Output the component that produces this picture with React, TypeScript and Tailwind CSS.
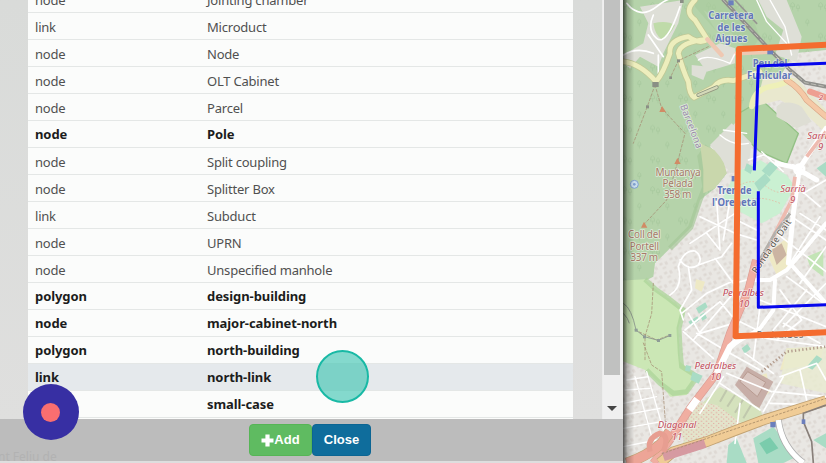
type Row = { kind: string; name: string; bold?: boolean; active?: boolean };

const rows: Row[] = [
  { kind: 'node', name: 'Jointing chamber' },
  { kind: 'link', name: 'Microduct' },
  { kind: 'node', name: 'Node' },
  { kind: 'node', name: 'OLT Cabinet' },
  { kind: 'node', name: 'Parcel' },
  { kind: 'node', name: 'Pole', bold: true },
  { kind: 'node', name: 'Split coupling' },
  { kind: 'node', name: 'Splitter Box' },
  { kind: 'link', name: 'Subduct' },
  { kind: 'node', name: 'UPRN' },
  { kind: 'node', name: 'Unspecified manhole' },
  { kind: 'polygon', name: 'design-building', bold: true },
  { kind: 'node', name: 'major-cabinet-north', bold: true },
  { kind: 'polygon', name: 'north-building', bold: true },
  { kind: 'link', name: 'north-link', bold: true, active: true },
  { kind: '', name: 'small-case', bold: true },
];

function TypeTable() {
  return (
    <div className="-mt-[14px] w-[545px] shrink-0 bg-[#fbfcfb] text-[13px] leading-[26px]">
      {rows.map((r) => (
        <div
          key={r.name}
          className={`grid h-[27px] grid-cols-[172px_1fr] border-b border-[#e4e7e6] pl-[7px] ${
            r.active ? 'bg-[#e5e9ec]' : ''
          } ${
            r.bold
              ? 'font-bold tracking-[-0.08px] text-[#1c1c1c]'
              : 'pt-px tracking-[-0.21px] text-[#505050]'
          }`}
        >
          <span>{r.kind}</span>
          <span>{r.name}</span>
        </div>
      ))}
    </div>
  );
}

function CityMap() {
  return (
    <svg viewBox="9 0 609 1389" className="block h-[463px] w-[203px] shrink-0" preserveAspectRatio="none">
      <defs>
        <pattern id="houses" width="34" height="30" patternUnits="userSpaceOnUse" patternTransform="rotate(-28)">
          <rect width="34" height="30" fill="#e9e7e3" />
          <rect x="4" y="4" width="9" height="7" fill="#dcd7d1" />
          <rect x="20" y="7" width="8" height="10" fill="#ded9d4" />
          <rect x="7" y="19" width="11" height="6" fill="#dfdad5" />
        </pattern>
        <pattern id="trees" width="84" height="92" patternUnits="userSpaceOnUse">
          <path d="M14 30v-10m-6 0q0-12 6-12t6 12zM30 34v-9m-5 0q0-11 5-11t5 11zM58 78v-9m-5 0q0-11 5-11t5 11z" fill="none" stroke="#a3c69b" strokeWidth="2" />
        </pattern>
        <pattern id="dots" width="15" height="13" patternUnits="userSpaceOnUse">
          <path d="M2 3h5M9 9h4" stroke="#e3a09a" strokeWidth="2.5" />
        </pattern>
        <linearGradient id="edge" x1="0" x2="1">
          <stop offset="0" stopColor="#000" stopOpacity=".65" />
          <stop offset=".4" stopColor="#000" stopOpacity=".22" />
          <stop offset="1" stopColor="#000" stopOpacity="0" />
        </linearGradient>
      </defs>
      <rect width="618" height="1389" fill="url(#houses)" />

      {/* woodland */}
      <path d="M0 0H618V150L520 160 470 250 400 330 345 370 270 440 300 470 320 520 285 565 240 600 215 680 190 705 150 745 105 790 100 830 70 845 0 850Z" fill="#b5d3aa" />
      <path d="M0 0H618V150L520 160 470 250 400 330 345 370 270 440 300 470 320 520 285 565 240 600 215 680 190 705 150 745 105 790 100 830 70 845 0 850Z" fill="url(#trees)" />
      <path d="M262 438L240 470 255 560 238 605 212 682 150 745" fill="none" stroke="#a5c899" strokeWidth="16" opacity=".7" />
      <path d="M225 20L290 95 250 30 300 60 390 160 420 110 400 60 330 0H225Z" fill="#a9cb9d" opacity=".6" />
      <path d="M240 430L305 460 320 520 285 565 250 580 250 510Z" fill="#c9d7ac" />
      <path d="M0 842L75 838 110 870 145 895 190 930 175 985 180 1085 230 1130 200 1185 150 1190 130 1160 75 1110 0 1080Z" fill="#cbe7b5" />
      <path d="M75 838L110 870 145 895 190 930 177 985 181 1060 185 1100 232 1130 200 1175 160 1180 120 1150 80 1110" fill="none" stroke="#acd49a" strokeWidth="15" opacity=".75" />
      <path d="M348 345L425 300 535 400 500 490 420 455 360 400Z" fill="#b1d2a3" stroke="#93c185" strokeWidth="4" />
      <path d="M345 520L420 480 500 525 525 560 480 640 425 670 340 625 310 590Z" fill="#caf0d2" />
      <path d="M350 560Q400 530 440 560T515 570M370 610Q410 580 480 610" fill="none" stroke="#e3b9a2" strokeWidth="2.5" strokeDasharray="5 5" />

      {/* built-up pockets in the hills */}
      <g fill="#dedfd7">
        <path d="M60 20L190 0 175 70 130 160 115 200 60 170 30 205 10 190 10 165 70 130 85 70Z" />
        <path d="M225 165L300 130 345 145 345 190 260 215Z" />
        <path d="M415 0L500 0 545 110 530 185 465 165 490 90 440 50Z" />
        <path d="M215 195L265 200 250 240 215 225Z" />
        <path d="M270 435L335 370 395 430 385 500 330 520 300 470Z" />
        <path d="M470 320Q490 300 535 315L560 345 530 370 470 350Z" />
      </g>
      <path d="M100 70Q140 60 165 75 150 110 125 118Q105 105 100 70Z" fill="#bfdba9" />
      <path d="M430 230L530 235 618 330V400L560 345 480 300 400 320 420 270Z" fill="#e9e8ce" />
      <path d="M470 320Q500 295 545 320L575 365 530 385 470 350Z" fill="#deded4" />
      <path d="M535 195L618 185V260L560 240Z" fill="url(#houses)" />

      {/* hill roads */}
      <g fill="none" strokeLinecap="round" strokeLinejoin="round">
        <g stroke="#fff" strokeWidth="5">
          <path d="M20 10Q60 60 110 20T185 0M100 45Q80 90 110 115T180 20M10 165Q50 140 100 160M85 105L130 170M115 165V220" />
          <path d="M235 180Q260 160 330 190L345 160M410 0L440 65 500 130M450 0L495 80 515 165" strokeWidth="4" />
        </g>
        <path d="M225 0Q190 35 225 60L262 118Q240 135 205 110 145 120 150 160 130 220 108 245 60 190 9 185M262 118Q180 125 175 160 190 215 205 245 208 285 222 292 255 275 280 262 300 235 340 242 390 225 420 215" stroke="#c0c896" strokeWidth="19" />
        <path d="M225 0Q190 35 225 60L262 118Q240 135 205 110 145 120 150 160 130 220 108 245 60 190 9 185M262 118Q180 125 175 160 190 215 205 245 208 285 222 292 255 275 280 262 300 235 340 242 390 225 420 215" stroke="#edeebd" strokeWidth="14" />
        <path d="M235 285L290 262" stroke="#8c9480" strokeWidth="12" />
        <path d="M235 285L290 262" stroke="#d5d9b9" strokeWidth="7" />
        <path d="M262 118L305 165M350 160L455 155" stroke="#efc8b2" strokeWidth="13" />
        <path d="M395 320Q400 270 450 260T510 240" stroke="#eef0b8" strokeWidth="16" />
        <path d="M310 0L455 155 510 210 555 248 618 260" stroke="#8f8f8b" strokeWidth="11" />
        <path d="M310 0L455 155 510 210 555 248 618 260" stroke="#c9c9c0" strokeWidth="2.5" strokeDasharray="14 9" />
        <path d="M345 0L410 70" stroke="#969791" strokeWidth="5" />
        <path d="M500 240Q540 265 560 300L618 350" stroke="#d8a788" strokeWidth="18" />
        <path d="M500 240Q540 265 560 300L618 350" stroke="#f5c9a6" strokeWidth="14" />
        <path d="M570 275L618 292" stroke="#ee9f91" strokeWidth="18" />
        <g stroke="#a58c72" strokeWidth="2.2" strokeDasharray="8 6">
          <path d="M105 255L125 325 195 400 172 490 140 600 75 670M105 255L80 325 40 430M265 140L175 182 150 235M100 850L95 940 75 1010V1080M45 990L110 1020 150 1005M70 1029L95 1095 125 1115 140 1320" />
        </g>
      </g>
      <g fill="#8a8f85"><path d="M97 246h19v15h-19z" /><rect x="78" y="316" width="9" height="9" /><rect x="171" y="178" width="9" height="9" /><rect x="148" y="229" width="8" height="8" /><rect x="180" y="0" width="11" height="9" /></g>
      <g fill="#d18b65"><path d="M118 336l8-18 12 18zM163 492l9-18 10 18zM63 683l9-18 10 18z" /></g>

      {/* urban blocks */}
      <g fill="#eee9c5"><path d="M440 760L500 715 515 790 470 825ZM228 838L255 845 245 875 225 865ZM390 1135L440 1120 450 1175 420 1200ZM500 1045L610 1040 600 1090 480 1110Z" /></g>
      <path d="M500 1045L618 1040V1180L480 1150Z" fill="#e9ebcf" opacity=".8" />
      <path d="M455 750L485 730 500 765 470 795Z" fill="#cbb4a2" />
      <g fill="#a9dcc5">
        <path d="M403 550L435 520 452 540 418 575ZM425 512L450 485 475 500 448 530ZM380 490L400 500 392 522 373 511ZM590 505L618 485V530ZM228 925l28-18 7 14-26 20zM205 965l27-16 6 12-24 18zM240 945l13-8 8 17-14 8zM198 1095l16 4-5 16-14-3zM218 1115l30 12-12 24-25-12z" />
        <path d="M400 1315L460 1280 530 1370 490 1389H415ZM325 1335L350 1315 380 1389H320ZM580 1320L618 1300V1345Z" />
        <path d="M560 1100l30-34 17 11-30 32zM365 1045l17-13 10 15-18 14z" />
      </g>
      <path d="M418 1330L450 1312 475 1345 440 1363Z" fill="#7accac" />
      <path d="M345 1155L380 1100 460 1145 415 1230Z" fill="#c7aea7" />
      <path d="M360 1145L383 1115 437 1147 412 1190Z" fill="#d8c5bf" stroke="#b89b91" strokeWidth="3" />
      <path d="M300 1160L420 1225 430 1255 345 1290 180 1355 200 1300 240 1215Z" fill="#d5e2bd" />
      <path d="M320 1170L300 1205M345 1185L322 1220M370 1198L345 1238M395 1212L370 1255" stroke="#c0c8ad" strokeWidth="6" />
      <path d="M235 1205L290 1215 365 1270 350 1300 200 1345 180 1290Z" fill="#e3e4cb" />
      <path d="M235 1205L290 1215 365 1270 350 1300 200 1345 180 1290Z" fill="url(#dots)" />
      <path d="M560 770L610 750V830L570 800Z" fill="#c3e4b6" />

      {/* streets */}
      <g fill="none" stroke="#fff" strokeLinecap="round" strokeLinejoin="round">
        <g strokeWidth="5">
          <path d="M150 885Q190 860 175 800 190 750 225 753 250 770 235 795L305 770 335 730M235 795Q205 815 180 780M285 775L340 850 400 835M205 800L215 870 180 930 190 960M185 940L260 880 345 840M205 940L240 1000 340 970M195 990L300 905 345 960M260 700L300 750 290 600M240 650L345 700 410 720M210 730L345 640M330 600L310 720M410 690L350 660M220 1020L340 880M230 1000L330 1060M190 995L280 1075" />
          <path d="M20 1140L85 1130M15 1170L90 1165M10 1210L110 1190M10 1245L120 1225M10 1285L125 1265M45 1130L95 1310M80 1115L130 1290M10 1340L110 1320" strokeWidth="4" />
          <path d="M300 1150L420 1230M320 1120L455 1175M330 1060L420 1110M375 1060L460 1120M360 1210L345 1330M310 1130L240 1240M480 1130L590 1090 618 1140M460 1175L618 1190M490 1130L430 1235M540 1110L560 1200M450 1210L610 1215" />
          <path d="M500 640L618 720M470 700L618 815M500 830L610 910M420 900L618 980M480 870L545 960 470 1020M560 870L460 990M618 850L490 980M600 650L510 790M618 740L540 850M530 560L600 620M550 580L618 540M540 640L618 690M405 1010L470 1020 618 1040M490 970L600 1030M420 920L400 1080M350 960L430 1000" />
          <path d="M300 405Q340 440 385 430M310 390L380 400M385 480L430 465 530 510M425 455L490 515" strokeWidth="4" />
        </g>
        <path d="M395 840L450 840 500 810 535 770 618 670M510 790L618 910M465 840L460 930 420 985 330 1040M400 835L360 930" strokeWidth="12" />
        <path d="M538 505L618 385M538 505L470 490M538 505L520 640 505 790M520 500L590 540" strokeWidth="15" />
        <circle cx="538" cy="508" r="14" strokeWidth="9" />
      </g>
      <path d="M618 395L560 470M525 530L515 600 465 700 410 810" fill="none" stroke="#eebbb0" strokeWidth="11" />
      <path d="M510 640L465 700 408 800" fill="none" stroke="#b3b0ab" strokeWidth="9" />

      {/* main avenues */}
      <g fill="none" strokeLinecap="butt">
        <path d="M408 780L385 870 330 1000 290 1120 210 1225 150 1320 100 1389" stroke="#dc9e96" strokeWidth="24" />
        <path d="M408 780L385 870 330 1000 290 1120 210 1225 150 1320 100 1389" stroke="#f0aea1" strokeWidth="20" />
        <path d="M290 1120L330 1040 365 1010" stroke="#fff" strokeWidth="19" />
        <path d="M232 1197L208 1230" stroke="#fff" strokeWidth="22" />
        <path d="M20 1389Q80 1370 125 1330L150 1295M120 1389L160 1355 260 1325 345 1292 430 1260 618 1202" stroke="#c1a273" strokeWidth="32" />
        <path d="M120 1389L160 1355 260 1325 345 1292 430 1260 618 1202" stroke="#f0cc96" strokeWidth="27" />
        <path d="M20 1389Q80 1370 125 1330L150 1295" stroke="#eda597" strokeWidth="29" />
        <path d="M130 1370L255 1330" stroke="#d69aa1" strokeWidth="28" />
        <path d="M125 1361L618 1195" stroke="#a88b68" strokeWidth="2.5" strokeDasharray="8 4" />
        <path d="M90 1355Q80 1315 120 1300 150 1305 130 1355" stroke="#e79e91" strokeWidth="16" />
        <path d="M475 1260Q485 1340 550 1389" stroke="#aaa" strokeWidth="20" />
        <path d="M475 1260Q485 1340 550 1389" stroke="#fff" strokeWidth="16" />
        <path d="M618 1215L550 1240V1265L575 1325 580 1389" stroke="#887f79" strokeWidth="5" />
        <path d="M425 1115L500 1055 618 1040" stroke="#b39c8d" strokeWidth="8" strokeDasharray="4 7" />
      </g>
      <g fill="#6c7fbd"><rect x="325" y="1" width="16" height="15" /><rect x="442" y="148" width="17" height="15" /><rect x="451" y="1266" width="16" height="16" /><rect x="545" y="1258" width="11" height="14" /><rect x="335" y="528" width="9" height="16" /></g>
      <circle cx="43" cy="553" r="12" fill="#c9ddec" stroke="#7e9fcf" strokeWidth="3" />
      <circle cx="43" cy="553" r="4" fill="#7e9fcf" />
      <g fill="none" stroke="#929e91" strokeWidth="3"><path d="M10 910Q35 925 48 990L73 1010 115 1021 149 1007M10 940Q25 955 28 970" /></g>
      <g fill="#8e9c97"><rect x="44" y="986" width="9" height="9" /><rect x="69" y="1006" width="9" height="9" /><rect x="111" y="1017" width="9" height="9" /><rect x="145" y="1002" width="9" height="9" /></g>

      {/* labels */}
      <g fontFamily="'Noto Sans', sans-serif" textAnchor="middle" paintOrder="stroke" strokeLinejoin="round" stroke="#fff" strokeOpacity=".55" strokeWidth="5">
        <g fill="#6276b9" fontSize="29" fontWeight="700">
          <text x="333" y="58" textLength="136" lengthAdjust="spacingAndGlyphs">Carretera</text>
          <text x="334" y="92" textLength="84" lengthAdjust="spacingAndGlyphs">de les</text>
          <text x="334" y="126" textLength="97" lengthAdjust="spacingAndGlyphs">Aigues</text>
          <text x="450" y="202" textLength="104" lengthAdjust="spacingAndGlyphs">Peu del</text>
          <text x="448" y="237" textLength="134" lengthAdjust="spacingAndGlyphs">Funicular</text>
          <text x="343" y="583" textLength="103" lengthAdjust="spacingAndGlyphs">Tren de</text>
          <text x="343" y="617" textLength="134" lengthAdjust="spacingAndGlyphs">l&apos;Oreneta</text>
        </g>
        <g fill="#a77b69" fontSize="30">
          <text x="174" y="527" textLength="135">Muntanya</text>
          <text x="173" y="561" textLength="91">Pelada</text>
          <text x="173" y="595" textLength="82">358 m</text>
          <text x="73" y="715" textLength="98">Coll del</text>
          <text x="73" y="749" textLength="88">Portell</text>
          <text x="73" y="783" textLength="83">337 m</text>
        </g>
        <g fill="#c24d5b" fontSize="29" fontStyle="italic">
          <text x="600" y="417" textLength="76">Sarrià</text>
          <text x="602" y="451">9</text>
          <text x="519" y="575" textLength="77">Sarrià</text>
          <text x="518" y="609">9</text>
          <text x="370" y="887" textLength="124">Pedralbes</text>
          <text x="372" y="921">10</text>
          <text x="286" y="1107" textLength="125">Pedralbes</text>
          <text x="287" y="1141">10</text>
          <text x="171" y="1285" textLength="116">Diagonal</text>
          <text x="171" y="1319">11</text>
          <text x="603" y="300" fontSize="23">2</text>
        </g>
        <text transform="translate(183 325) rotate(69)" x="61" y="0" fill="#9a8dac" fontSize="29" textLength="139">Barcelona</text>
        <text transform="translate(462 744) rotate(-56)" x="0" y="0" fill="#5a5650" fontSize="27" textLength="188">Ronda de Dalt</text>
        <text x="480" y="1014" fill="#666" fontSize="27" textLength="140">Pedralbes</text>
      </g>

      {/* survey boundaries */}
      <path d="M630 130L357 143 347 1005 630 992" transform="translate(0 4)" fill="none" stroke="#f46c2f" strokeWidth="18" strokeLinejoin="round" />
      <path d="M630 189L415 198 403 511M415 574V922L630 914" fill="none" stroke="#0606ec" strokeWidth="9" strokeLinecap="butt" strokeLinejoin="round" />
      <rect x="9" width="34" height="1389" fill="url(#edge)" />
    </svg>
  );
}

function Scrollbar() {
  return (
    <div className="flex h-[419px] w-[21px] shrink-0 flex-col items-center border-l border-[#ededed] bg-[#f0f0f0] pr-[2px]">
      <div className="h-[375px] w-[16px] bg-[#c0c1c0]" />
      <svg className="mt-[31px] h-[5px] w-[10px]" viewBox="0 0 10 5">
        <path d="M0 0H10L5 5Z" fill="#444" />
      </svg>
    </div>
  );
}

export default function App() {
  return (
    <main className="relative flex h-[463px] w-[826px] overflow-hidden bg-[#dcdddc] font-['Noto_Sans',sans-serif]">
      <section className="flex w-[623px] shrink-0 flex-col">
        <div className="flex h-[419px] shrink-0 justify-end overflow-hidden bg-linear-to-b from-[#d9dbd9] to-[#dfdfde]">
          <TypeTable />
          <div className="w-[29px] shrink-0" />
          <Scrollbar />
        </div>
        <footer className="relative flex h-[42px] shrink-0 items-center justify-center overflow-hidden bg-[#bcbcbc] pr-[3px] font-['Liberation_Sans',Arial,sans-serif] text-[13px] font-bold text-white">
          <span className="absolute -left-[2px] top-[30px] font-['Noto_Sans',sans-serif] text-[12px] leading-[15px] font-normal text-[#b2b2b2]">
            nt Feliu de
          </span>
          <button className="flex h-[32px] w-[63px] items-center justify-center rounded-[4px] border border-[#56b556] bg-[#5fbb61]">
            <svg viewBox="0 0 13 13" className="h-[13px] w-[13px]">
              <path d="M4.4 .5h4.2v3.9h3.9v4.2H8.6v3.9H4.4V8.6H.5V4.4h3.9z" fill="currentColor" />
            </svg>
            Add
          </button>
          <button className="h-[32px] w-[59px] rounded-[4px] border border-[#0c6593] bg-[#0f6d9c]">Close</button>
        </footer>
        <div className="h-[2px] bg-[#dedede]" />
      </section>
      <CityMap />
      <div className="absolute left-[316px] top-[350px] h-[53px] w-[53px] rounded-full border-2 border-[#19b9a5] bg-[#43c6b3]/65" />
      <div className="absolute left-[23px] top-[384px] flex h-[56px] w-[56px] items-center justify-center rounded-full bg-[#372fa3] pr-px">
        <div className="h-[19px] w-[19px] rounded-full bg-[#f96e70]" />
      </div>
    </main>
  );
}
